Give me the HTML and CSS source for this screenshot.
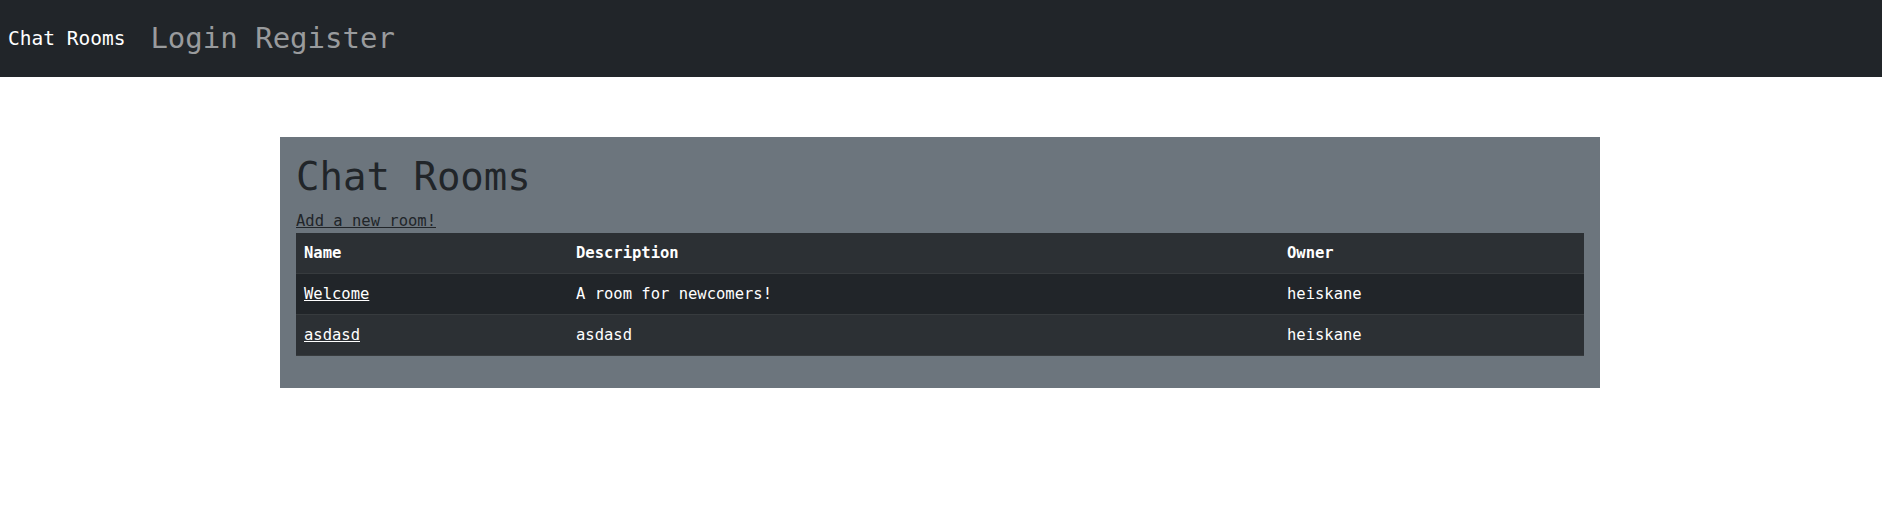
FILE: index.html
```html
<!DOCTYPE html>
<html lang="en">
<head>
<meta charset="utf-8">
<title>Chat Rooms</title>
<link rel="stylesheet" href="styles.css">
</head>
<body>
<nav class="navbar">
  <a class="brand" href="#">Chat Rooms</a>
  <div class="nav-links"><a class="nav-link" href="#">Login</a> <a class="nav-link" href="#">Register</a></div>
</nav>
<main class="main">
  <section class="panel">
    <h1 class="title">Chat Rooms</h1>
    <a class="add-link" href="#">Add a new room!</a>
    <table class="rooms">
      <thead>
        <tr class="row-light">
          <th class="col-name">Name</th>
          <th class="col-desc">Description</th>
          <th class="col-owner">Owner</th>
        </tr>
      </thead>
      <tbody>
        <tr class="row-dark">
          <td><a class="room-link" href="#">Welcome</a></td>
          <td>A room for newcomers!</td>
          <td>heiskane</td>
        </tr>
        <tr class="row-light">
          <td><a class="room-link" href="#">asdasd</a></td>
          <td>asdasd</td>
          <td>heiskane</td>
        </tr>
      </tbody>
    </table>
  </section>
</main>
</body>
</html>
```
FILE: styles.css
```css
* { box-sizing: border-box; }
html, body { margin: 0; padding: 0; background: #fff; }
body {
  font-family: "DejaVu Sans Mono", "Liberation Mono", monospace;
  color: #212529;
}
.navbar {
  display: flex;
  align-items: center;
  height: 77px;
  padding: 0 8px;
  background: #212529;
}
.brand {
  font-size: 19.5px;
  color: #fff;
  text-decoration: none;
  margin-right: 16px;
  line-height: 1.5;
}
.nav-links {
  font-size: 29px;
  line-height: 1.2;
  padding-left: 9px;
}
.nav-link {
  color: #999b9d;
  text-decoration: none;
}
.main { padding-top: 60px; }
.panel {
  width: 1320px;
  margin: 0 0 0 calc(50% - 661px);
  padding: 16px;
  background: #6c757d;
}
.title {
  margin: 0 0 8px;
  font-size: 39px;
  font-weight: 500;
  line-height: 48px;
  color: #212529;
}
.add-link {
  display: block;
  font-size: 15.5px;
  line-height: 24px;
  color: #212529;
  text-decoration: underline;
}
.rooms {
  width: 100%;
  border-collapse: collapse;
  margin-bottom: 16px;
  font-size: 15.5px;
  color: #fff;
}
.rooms th, .rooms td {
  padding: 8px;
  line-height: 24px;
  text-align: left;
  border-bottom: 1px solid #373b3e;
}
.rooms th { font-weight: bold; }
.col-name { width: 272px; }
.col-desc { width: 711px; }
.row-light { background: #2c3034; }
.row-dark { background: #212529; }
.room-link { color: #fff; text-decoration: underline; }
```
